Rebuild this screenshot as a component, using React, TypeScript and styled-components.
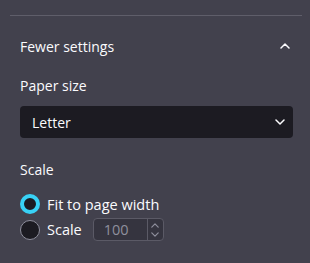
import styled, { createGlobalStyle } from 'styled-components';

const GlobalStyle = createGlobalStyle`
  html, body {
    margin: 0;
    padding: 0;
    background: #42414d;
  }
  body {
    font-family: 'Open Sans', 'Noto Sans', sans-serif;
    color: #fbfbfe;
  }
`;

const Chevron: React.FC<{ up?: boolean; size?: number; color?: string }> = ({
  up,
  size = 10,
  color = '#fbfbfe',
}) => (
  <svg width={size} height={size / 2 + 1} viewBox="0 0 10 6" fill="none">
    <polyline
      points={up ? '1,5 5,1 9,5' : '1,1 5,5 9,1'}
      stroke={color}
      strokeWidth={1.5}
      strokeLinecap="round"
      strokeLinejoin="round"
    />
  </svg>
);

const App: React.FC = () => {
  return (
    <>
      <GlobalStyle />
      <Panel>
        <Divider />
        <Section>
          <Header>
            <span>Fewer settings</span>
            <Chevron up />
          </Header>

          <Label>Paper size</Label>
          <Select>
            <span>Letter</span>
            <Chevron />
          </Select>

          <Label $spaced>Scale</Label>
          <Options>
            <Option>
              <Radio $checked />
              <span>Fit to page width</span>
            </Option>
            <Option>
              <Radio />
              <span>Scale</span>
              <NumberInput>
                <span>100</span>
                <Spinner>
                  <Chevron up size={8} color="#8f8f9d" />
                  <Chevron size={8} color="#8f8f9d" />
                </Spinner>
              </NumberInput>
            </Option>
          </Options>
        </Section>
      </Panel>
    </>
  );
};

// Styles
const Panel = styled.div`
  width: 310px;
  height: 263px;
  padding: 15px 8px 0 10px;
  box-sizing: border-box;
`;

const Divider = styled.hr`
  margin: 0;
  border: none;
  height: 1px;
  background: #5f5e6a;
`;

const Section = styled.div`
  padding: 0 9px 0 10px;
  display: flex;
  flex-direction: column;
  font-size: 14px;
`;

const Header = styled.div`
  height: 60px;
  display: flex;
  align-items: center;
  justify-content: space-between;
  padding-right: 3px;
`;

const Label = styled.div<{ $spaced?: boolean }>`
  height: 20px;
  line-height: 20px;
  margin-top: ${(p) => (p.$spaced ? '22px' : '0')};
`;

const Select = styled.div`
  margin-top: 10px;
  height: 32px;
  border-radius: 4px;
  background: #1c1b22;
  display: flex;
  align-items: center;
  justify-content: space-between;
  padding: 0 8px 0 12px;
`;

const Options = styled.div`
  margin-top: 14px;
  display: flex;
  flex-direction: column;
  gap: 4px;
  font-size: 14.5px;
`;

const Option = styled.label`
  display: flex;
  align-items: center;
  gap: 7px;
  min-height: 20px;
`;

const Radio = styled.span<{ $checked?: boolean }>`
  width: 20px;
  height: 20px;
  box-sizing: border-box;
  border-radius: 50%;
  background: #1c1b22;
  border: ${(p) => (p.$checked ? '4px solid #38d1f5' : '1px solid #8f8f9d')};
  flex-shrink: 0;
`;

const NumberInput = styled.div`
  margin-left: 4px;
  width: 71px;
  height: 23px;
  box-sizing: border-box;
  border: 1px solid #5b5a66;
  border-radius: 4px;
  background: #35343f;
  display: flex;
  align-items: center;
  color: #8f8f9d;
  span {
    flex: 1;
    padding-left: 10px;
  }
`;

const Spinner = styled.div`
  width: 15px;
  height: 100%;
  border-left: 1px solid #5b5a66;
  display: flex;
  flex-direction: column;
  align-items: center;
  justify-content: center;
  gap: 4px;
`;

export default App;
